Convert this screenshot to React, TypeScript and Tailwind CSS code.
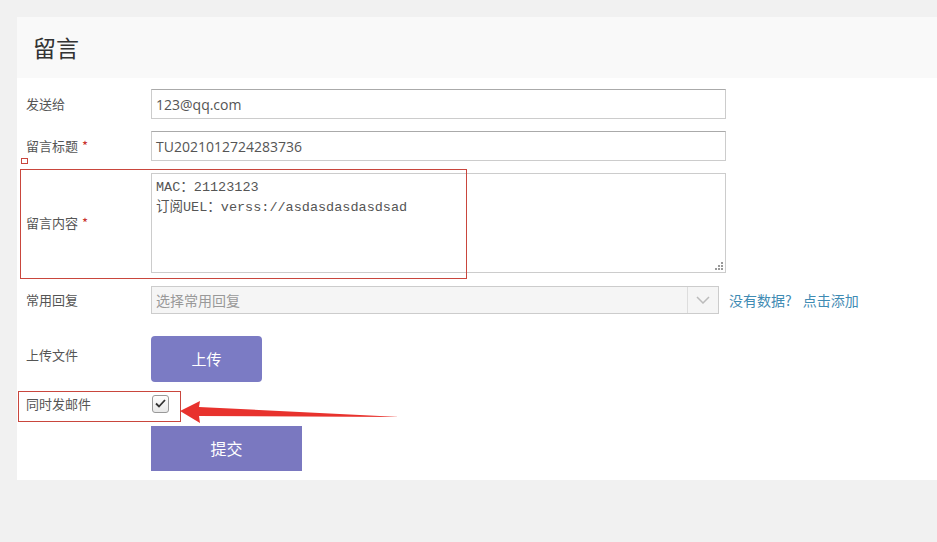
import React from "react";

const labelCls = "w-[125px] shrink-0 text-[13px] text-[#555]";
const cjk = { fontFamily: '"Noto Sans CJK SC", "Noto Sans", sans-serif' };

function Star() {
  return <span className="ml-1 text-[#c9302c]">*</span>;
}

export default function App() {
  return (
    <div
      className="relative h-[542px] w-[937px] overflow-hidden bg-[#f1f1f1] pl-[17px] pt-[17px]"
      style={cjk}
    >
      <div className="h-[463px] w-[920px] bg-white">
        <div className="flex h-[61px] items-center bg-[#f9f9f9] pl-[16px]">
          <h1 className="text-[23px] text-[#333]">留言</h1>
        </div>

        <div className="pl-[9px]">
          <div className="mt-[11px] flex items-center">
            <span className={labelCls}>发送给</span>
            <div className="flex h-[30px] w-[575px] items-center border border-[#ccc] border-t-[#aaa] px-[4px] text-[14px] text-[#555]" style={{ fontFamily: '"Open Sans", sans-serif' }}>
              123@qq.com
            </div>
          </div>

          <div className="mt-[12px] flex items-center">
            <span className={labelCls}>
              留言标题<Star />
            </span>
            <div className="flex h-[30px] w-[575px] items-center border border-[#ccc] border-t-[#aaa] px-[4px] text-[14px] text-[#555]" style={{ fontFamily: '"Open Sans", sans-serif' }}>
              TU2021012724283736
            </div>
          </div>

          <div className="mt-[12px] flex items-center">
            <span className={labelCls}>
              留言内容<Star />
            </span>
            <div
              className="relative h-[100px] w-[575px] border border-[#ccc] px-[4px] pt-[4px] text-[13.5px] leading-[20px] text-[#555]"
              style={{ fontFamily: '"Liberation Mono", "Noto Sans CJK SC", monospace' }}
            >
              <div>MAC：21123123</div>
              <div>订阅UEL：verss://asdasdasdasdsad</div>
              <svg className="absolute bottom-[1px] right-[1px]" width="10" height="10" viewBox="0 0 10 10">
                <g fill="#999">
                  <rect x="7" y="1" width="2" height="2" />
                  <rect x="4" y="4" width="2" height="2" />
                  <rect x="7" y="4" width="2" height="2" />
                  <rect x="1" y="7" width="2" height="2" />
                  <rect x="4" y="7" width="2" height="2" />
                  <rect x="7" y="7" width="2" height="2" />
                </g>
              </svg>
            </div>
          </div>

          <div className="mt-[13px] flex items-center">
            <span className={labelCls}>常用回复</span>
            <div className="flex h-[28px] w-[568px] items-stretch border border-[#ccc] bg-[#f5f5f5]">
              <span className="flex flex-1 items-center px-[4px] text-[14px] text-[#999]">选择常用回复</span>
              <span className="flex w-[31px] items-center justify-center border-l border-[#ddd]">
                <svg width="14" height="8" viewBox="0 0 14 8">
                  <path d="M1 1 L7 7 L13 1" fill="none" stroke="#bbb" strokeWidth="1.5" />
                </svg>
              </span>
            </div>
            <span className="ml-[10px] text-[14px] text-[#3f8bb3]">没有数据?</span>
            <span className="ml-[11px] text-[14px] text-[#3f8bb3]">点击添加</span>
          </div>

          <div className="mt-[22px] flex items-center">
            <span className={`${labelCls} -mt-[9px]`}>上传文件</span>
            <button className="h-[46px] w-[111px] rounded-[4px] bg-[#7b7bc4] text-[15px] text-white">
              上传
            </button>
          </div>

          <div className="mt-[12px] flex items-center">
            <span className={labelCls}>同时发邮件</span>
            <span className="ml-[1px] flex h-[18px] w-[17px] items-center justify-center rounded-[3px] border border-[#999] bg-[linear-gradient(#fff,#e8e8e8)]">
              <svg width="11" height="9" viewBox="0 0 11 9">
                <path d="M1 4.5 L4 7.5 L10 1" fill="none" stroke="#333" strokeWidth="1.8" />
              </svg>
            </span>
          </div>

          <div className="mt-[12px] flex">
            <span className="w-[125px] shrink-0" />
            <button className="h-[45px] w-[151px] bg-[#7a78c0] text-[16px] text-white">
              提交
            </button>
          </div>
        </div>
      </div>

      {/* annotations */}
      <div className="absolute left-[21px] top-[158px] h-[6px] w-[7px] border border-[#c9463d]" />
      <div className="absolute left-[20px] top-[169px] h-[110px] w-[447px] border border-[#c9463d]" />
      <div className="absolute left-[18px] top-[391px] h-[31px] w-[163px] border border-[#c9463d]" />
      <svg className="absolute left-[178px] top-[398px]" width="224" height="28" viewBox="0 0 224 28">
        <polygon points="2,13 22,3 21,9 222,19 21,18 22,25" fill="#e8322d" />
      </svg>
    </div>
  );
}
